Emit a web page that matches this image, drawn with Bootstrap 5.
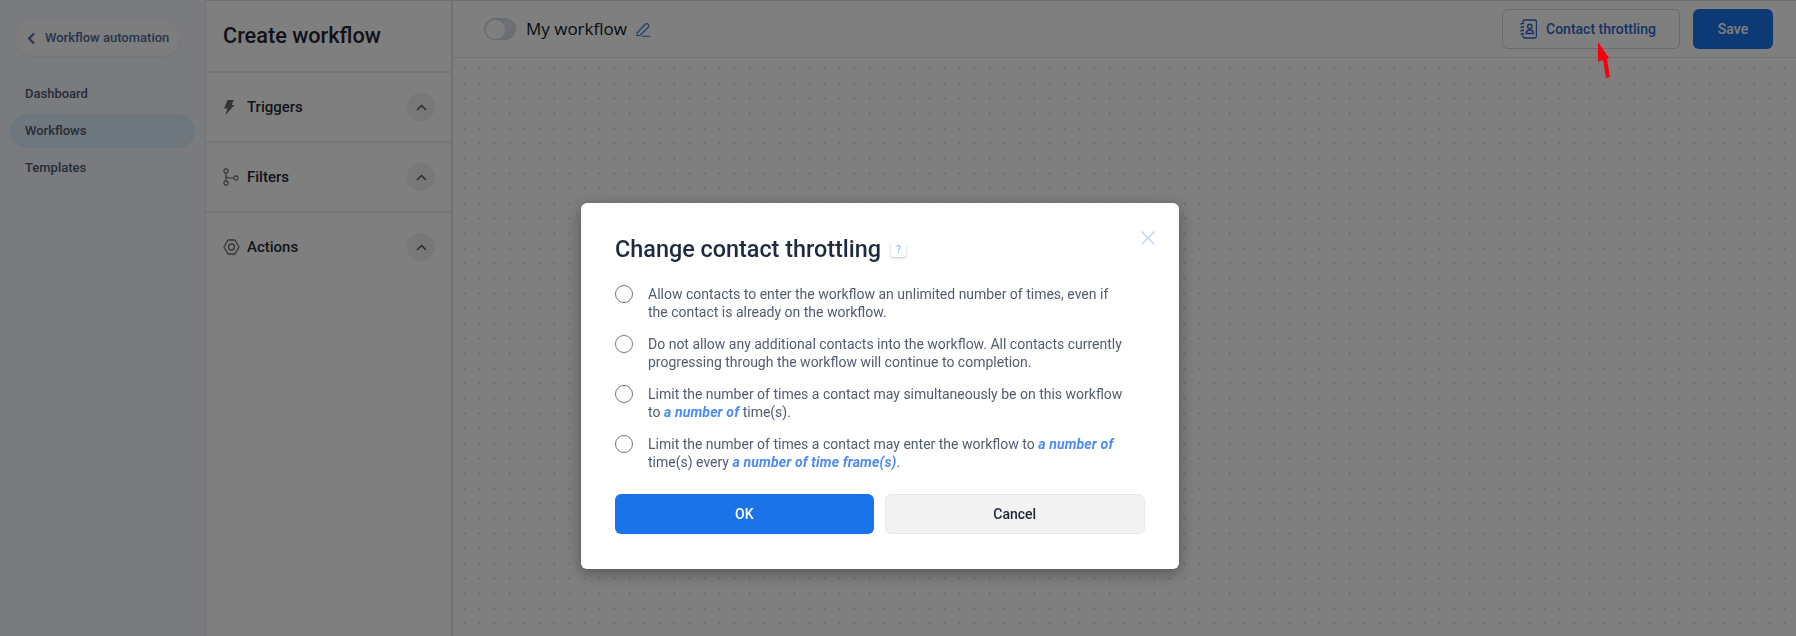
<!DOCTYPE html>
<html lang="en">
<head>
    <meta charset="UTF-8">
    <meta name="viewport" content="width=device-width, initial-scale=1.0">
    <title>Create workflow</title>
    <link href="https://cdn.jsdelivr.net/npm/bootstrap@5.3.0/dist/css/bootstrap.min.css" rel="stylesheet">
    <style>
        html, body { height: 636px; overflow: hidden; }
        body { font-family: Roboto, "Liberation Sans", sans-serif; background: #fff; color: #1e2533; }

        /* left menu */
        .app-wrap { height: 636px; }
        .side-menu { width: 205px; flex: 0 0 205px; background: #f3f6fd; padding: 20px 10px 0; }
        .back-pill { width: 165px; height: 36px; margin-left: 5px; border-radius: 18px; background: #fbfbfb; color: #4d6a9e; font-size: 13px; font-weight: 500; padding-left: 12px; gap: 9px; box-shadow: 0 1px 2px rgba(0,0,0,.05); }
        .menu-list { margin-top: 21px; gap: 3px; }
        .menu-item { height: 34px; line-height: 34px; padding-left: 15px; width: 185px; border-radius: 17px; font-size: 13px; font-weight: 500; color: #4e5a6e; }
        .menu-item.is-on { background: #dcedfc; }

        /* create panel */
        .tool-panel { width: 248px; flex: 0 0 248px; background: #fff; border-left: 1px solid #d8e2ee; border-right: 2px solid #d8e2ee; border-top: 1px solid #d8e2ee; }
        .tool-head { height: 72px; border-bottom: 2px solid #e4ecf5; padding: 0 17px; font-size: 21.7px; font-weight: 500; color: #1e2533; }
        .tool-row { height: 70px; border-bottom: 2px solid #e4ecf5; padding: 0 16px 0 17px; font-size: 15px; font-weight: 500; color: #232a38; }
        .tool-row:last-child { border-bottom-color: transparent; }
        .tool-ico { width: 24px; line-height: 0; }
        .chev-round { width: 28px; height: 28px; border-radius: 50%; background: #f0f0f0; }

        /* canvas */
        .main-area { min-width: 0; }
        .top-strip { height: 58px; border-top: 1px solid #d8d8d8; border-bottom: 1px solid #e6e6e6; background: #fff; padding: 0 23px 0 31px; }
        .flow-switch { width: 32px; height: 22px; border-radius: 11px; background: #d8e0ea; border: 1px solid #d0d5da; margin-right: 10px; padding: 2px; }
        .flow-knob { width: 19px; height: 19px; border-radius: 50%; background: #fff; margin: -1px; }
        .flow-name { font-size: 17px; color: #0c1424; font-family: "Open Sans", Roboto, sans-serif; margin-right: 9px; }
        .btn-throttle { width: 178px; height: 40px; border: 1px solid #d5d5d5; border-radius: 6px; color: #2f65c8; font-size: 14px; font-weight: 500; background: #fff; gap: 9px; margin-right: 13px; padding: 0 0 0 17px; }
        .btn-keep { width: 80px; height: 40px; border-radius: 6px; background: #1a73e8; border: 0; color: #fff; font-size: 14px; font-weight: 500; padding: 0; }
        .dot-field { height: 578px; background-color: #fff; background-image: radial-gradient(circle, #e2e2e2 1px, transparent 1.4px); background-size: 15px 15px; background-position: 4px 3px; }

        /* overlay + dialog */
        .shade { position: fixed; inset: 0; background: rgba(0,0,0,.5); z-index: 10; }
        .throttle-dialog { position: fixed; left: 581px; top: 203px; width: 598px; height: 366px; z-index: 20; background: #fff; border-radius: 6px; padding: 31px 34px 0; box-shadow: 0 4px 16px rgba(0,0,0,.35); }
        .dialog-title { font-size: 23.4px; font-weight: 500; color: #1f2a40; line-height: 30px; margin: 0; }
        .help-mark { width: 15px; height: 14px; background: #fff; border-radius: 2px; box-shadow: 0 1px 3px rgba(0,0,0,.25); color: #7fa6f2; font-size: 10px; line-height: 14px; text-align: center; margin-left: 10px; margin-top: 2px; }
        .dialog-x { position: absolute; top: 28px; right: 24px; width: 14px; height: 14px; padding: 0; border: 0; background: none; line-height: 0; }
        .pick-list { margin-top: 21px; gap: 14px; }
        .pick-row { gap: 15px; font-size: 14px; line-height: 18px; color: #525c70; min-height: 36px; }
        .pick-dot { width: 18px; height: 18px; flex: 0 0 18px; border: 1px solid #6f7685; border-radius: 50%; background: #fff; }
        .pick-row a { color: #4c8bf5; font-weight: 700; font-style: italic; text-decoration: none; letter-spacing: .15px; }
        .dialog-btns { margin-top: 23px; gap: 11px; }
        .dialog-btns .btn { flex: 1 1 0; height: 40px; font-size: 14px; font-weight: 500; border-radius: 6px; padding: 0; }
        .btn-ok { background: #1a73e8; color: #fff; border: 0; }
        .btn-nope { background: #f3f3f3; border: 1px solid #e8e8e8; color: #1e2533; }

        .red-arrow { position: fixed; left: 1590px; top: 40px; z-index: 30; }
    </style>
</head>
<body>
    <div class="app-wrap d-flex">
        <!-- left menu -->
        <div class="side-menu">
            <div class="back-pill d-flex align-items-center">
                <svg width="9" height="13" viewBox="0 0 9 13" fill="none" stroke="#4d6a9e" stroke-width="2"><path d="M7 1.500 2 6.500l5 5"/></svg>
                <span>Workflow automation</span>
            </div>
            <div class="menu-list d-flex flex-column">
                <div class="menu-item">Dashboard</div>
                <div class="menu-item is-on">Workflows</div>
                <div class="menu-item">Templates</div>
            </div>
        </div>

        <!-- triggers, filters, actions -->
        <div class="tool-panel">
            <div class="tool-head d-flex align-items-center">Create workflow</div>
            <div class="tool-row d-flex align-items-center">
                <span class="tool-ico"><svg width="12" height="17" viewBox="0 0 12 17" fill="#6a6a6a"><path d="M4.500 1H11L8.500 6H11.500L2 16.500 4.500 9.500H1z"/></svg></span>
                <span class="flex-grow-1">Triggers</span>
                <span class="chev-round d-flex align-items-center justify-content-center"><svg width="11" height="7" viewBox="0 0 11 7" fill="none" stroke="#555" stroke-width="1.500"><path d="M1 6l4.500-4.500L10 6"/></svg></span>
            </div>
            <div class="tool-row d-flex align-items-center">
                <span class="tool-ico"><svg width="16" height="18" viewBox="0 0 16 18" fill="none" stroke="#6a6a6a" stroke-width="1.100"><circle cx="3" cy="3" r="2.100"/><circle cx="3" cy="15" r="2.100"/><circle cx="13" cy="10" r="2.100"/><path d="M3 5.100v7.800M3 7c0 2 1 3 3 3h4.900"/></svg></span>
                <span class="flex-grow-1">Filters</span>
                <span class="chev-round d-flex align-items-center justify-content-center"><svg width="11" height="7" viewBox="0 0 11 7" fill="none" stroke="#555" stroke-width="1.500"><path d="M1 6l4.500-4.500L10 6"/></svg></span>
            </div>
            <div class="tool-row d-flex align-items-center">
                <span class="tool-ico"><svg width="17" height="16" viewBox="0 0 17 16" fill="none" stroke="#6a6a6a" stroke-width="1.300" stroke-linejoin="round"><path d="M5 1h7l4 7-4 7H5L1 8z"/><circle cx="8.500" cy="8" r="3"/></svg></span>
                <span class="flex-grow-1">Actions</span>
                <span class="chev-round d-flex align-items-center justify-content-center"><svg width="11" height="7" viewBox="0 0 11 7" fill="none" stroke="#555" stroke-width="1.500"><path d="M1 6l4.500-4.500L10 6"/></svg></span>
            </div>
        </div>

        <!-- canvas -->
        <div class="main-area flex-grow-1">
            <div class="top-strip d-flex align-items-center">
                <div class="flow-switch"><div class="flow-knob"></div></div>
                <span class="flow-name">My workflow</span>
                <svg width="15" height="15" viewBox="0 0 15 15" fill="none" stroke="#3b70d8" stroke-width="1.100"><path d="M1 11 9.500 2a1.500 1.500 0 0 1 2.100 0l.9.900a1.500 1.500 0 0 1 0 2.100L4 13.500H1zM6 14.300h8.500"/></svg>
                <div class="ms-auto d-flex">
                    <button class="btn btn-throttle d-flex align-items-center">
                        <svg width="17" height="20" viewBox="0 0 17 20" fill="none" stroke="#2f65c8" stroke-width="1.400"><path d="M3 3.500V3a2 2 0 0 1 2-2h9.500a2 2 0 0 1 2 2v14a2 2 0 0 1-2 2H5a2 2 0 0 1-2-2v-.5"/><circle cx="9.800" cy="7.500" r="2.200"/><path d="M6 14.500c.4-2.500 1.800-3.500 3.800-3.500s3.400 1 3.800 3.500H6zM.5 5 4 4M.5 8.500 4 7.500M.5 12 4 11M.5 15.500 4 14.500"/></svg>
                        <span>Contact throttling</span>
                    </button>
                    <button class="btn btn-keep">Save</button>
                </div>
            </div>
            <div class="dot-field"></div>
        </div>
    </div>

    <div class="shade"></div>

    <div class="throttle-dialog">
        <button class="dialog-x" aria-label="Close"><svg width="14" height="14" viewBox="0 0 14 14" fill="none" stroke="#c3d4f2" stroke-width="1.500"><path d="M.5.500l13 13M13.500.500l-13 13"/></svg></button>
        <div class="d-flex align-items-center">
            <h5 class="dialog-title">Change contact throttling</h5>
            <span class="help-mark">?</span>
        </div>
        <div class="pick-list d-flex flex-column">
            <div class="pick-row d-flex"><span class="pick-dot"></span><span>Allow contacts to enter the workflow an unlimited number of times, even if<br>the contact is already on the workflow.</span></div>
            <div class="pick-row d-flex"><span class="pick-dot"></span><span>Do not allow any additional contacts into the workflow. All contacts currently<br>progressing through the workflow will continue to completion.</span></div>
            <div class="pick-row d-flex"><span class="pick-dot"></span><span>Limit the number of times a contact may simultaneously be on this workflow<br>to <a href="#">a number of</a> time(s).</span></div>
            <div class="pick-row d-flex"><span class="pick-dot"></span><span>Limit the number of times a contact may enter the workflow to <a href="#">a number of</a><br>time(s) every <a href="#">a number of time frame(s)</a>.</span></div>
        </div>
        <div class="dialog-btns d-flex">
            <button class="btn btn-ok">OK</button>
            <button class="btn btn-nope">Cancel</button>
        </div>
    </div>

    <svg class="red-arrow" width="26" height="42" viewBox="0 0 26 42"><path d="M8 2 8 22 13 20 16 38 20 37 17 19 19 18z" fill="#f5000c"/></svg>

    <script src="https://cdn.jsdelivr.net/npm/bootstrap@5.3.0/dist/js/bootstrap.bundle.min.js"></script>
</body>
</html>
